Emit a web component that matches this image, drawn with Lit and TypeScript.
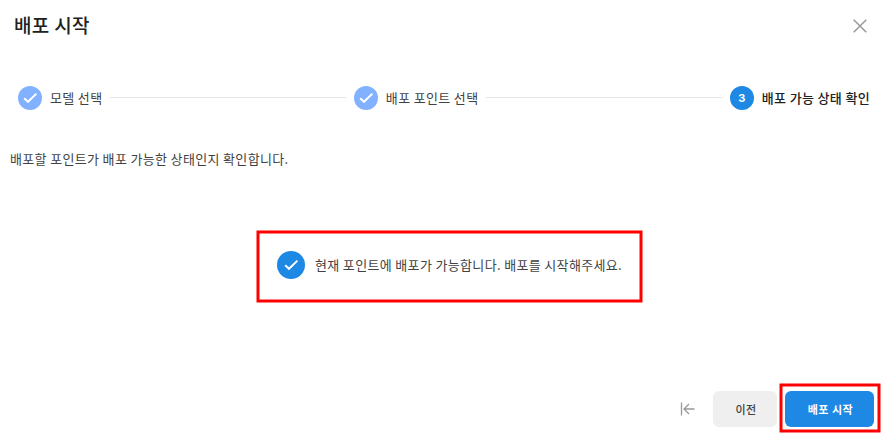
import { LitElement, html, css, svg } from "lit";
import { customElement, property } from "lit/decorators.js";

const check = svg`<path d="M6.2 12.2 L10 15.8 L18.4 7.6" fill="none" stroke="#fff" stroke-width="2"/>`;

@customElement("step-item")
class StepItem extends LitElement {
  @property() label = "";
  @property({ type: Number }) index = 1;
  @property({ type: Boolean, reflect: true }) current = false;

  static styles = css`
    :host { display: flex; align-items: center; gap: 8px; white-space: nowrap; color: #424242; }
    :host([current]) { color: #212121; font-weight: 500; }
    .dot { width: 24px; height: 24px; border-radius: 50%; background: #82b1ff; display: flex; align-items: center; justify-content: center; }
    :host([current]) .dot { background: #1e88e5; }
    .num { color: #fff; font: 700 11px/24px Inter, "Noto Sans", sans-serif; letter-spacing: 0; }
    .label { height: 20px; }
    svg { display: block; }
  `;

  render() {
    return html`
      <div class="dot">
        ${this.current
          ? html`<span class="num">${this.index}</span>`
          : html`<svg width="24" height="24" viewBox="0 0 24 24">${check}</svg>`}
      </div>
      <span class="label">${this.label}</span>
    `;
  }
}

@customElement("app-root")
class AppRoot extends LitElement {
  static styles = css`
    :host { display: flex; flex-direction: column; box-sizing: border-box; width: 888px; height: 441px; background: #fff; overflow: hidden;
      font: 400 13px/20px "Noto Sans CJK KR", "Noto Sans", sans-serif; letter-spacing: 0.34px; color: #424242; }
    .head { display: flex; justify-content: space-between; align-items: center; height: 52px; padding: 0 21px 0 14px; }
    h1 { margin: -2px 0 0; font-size: 19px; line-height: 28px; font-weight: 500; color: #212121; letter-spacing: 0.3px; }
    svg { display: block; }
    .steps { display: flex; align-items: center; height: 24px; margin-top: 34px; padding: 0 18px 0 18px; gap: 8px; }
    .line { flex: 1; height: 1px; background: #e6e6e6; position: relative; top: -0.5px; }
    .desc { margin: 39px 0 0 10px; }
    .result { position: relative; align-self: flex-start; box-sizing: border-box; width: 386px; height: 72px; margin: 61px 0 0 257px; padding: 0 0 0 20px; display: flex; align-items: center; gap: 10px; }
    .result span { margin-top: -2px; }
    .ok { margin-top: -2px; width: 28px; height: 28px; border-radius: 50%; background: #1e88e5; display: flex; align-items: center; justify-content: center; }
    .outline { position: absolute; pointer-events: none; fill: none; stroke: #f00; stroke-width: 3; }
    .result .outline { left: -1px; top: 0; }
    .foot { display: flex; align-items: center; margin-top: auto; padding: 0 14px 14px 0; justify-content: flex-end; }
    button { font: 500 11px/20px "Noto Sans CJK KR", "Noto Sans", sans-serif; letter-spacing: 0.5px; border: 0; height: 36px; border-radius: 6px; padding: 0; }
    .back { margin-right: 17.5px; }
    .prev { width: 64px; background: #efefef; color: #424242; margin-right: 8px; padding-left: 2px; }
    .mark { position: relative; display: flex; }
    .mark .outline { left: -6px; top: -8px; }
    .start { width: 89px; padding-left: 2px; background: #1e88e5; color: #fff; font-weight: 700; }
  `;

  render() {
    return html`
      <header class="head">
        <h1>배포 시작</h1>
        <svg width="14" height="14" viewBox="0 0 14 14"><path d="M.7 .7 13.3 13.3M13.3 .7 .7 13.3" stroke="#999" stroke-width="1.5" fill="none"/></svg>
      </header>
      <nav class="steps">
        <step-item label="모델 선택"></step-item>
        <div class="line"></div>
        <step-item label="배포 포인트 선택"></step-item>
        <div class="line"></div>
        <step-item label="배포 가능 상태 확인" index="3" current></step-item>
      </nav>
      <div class="desc">배포할 포인트가 배포 가능한 상태인지 확인합니다.</div>
      <section class="result">
        <div class="ok"><svg width="24" height="24" viewBox="0 0 24 24">${check}</svg></div>
        <span>현재 포인트에 배포가 가능합니다. 배포를 시작해주세요.</span>
        <svg class="outline" width="388" height="74"><rect x="2" y="2" width="383" height="69"/></svg>
      </section>
      <footer class="foot">
        <svg class="back" width="16" height="14" viewBox="0 0 16 14"><path d="M1.5 0.5V13.5M14.5 7H4M9 2 4 7 9 12" stroke="#999" stroke-width="1.3" fill="none"/></svg>
        <button class="prev">이전</button>
        <div class="mark">
          <button class="start">배포 시작</button>
          <svg class="outline" width="104" height="54"><rect x="2" y="2" width="98" height="46"/></svg>
        </div>
      </footer>
    `;
  }
}
